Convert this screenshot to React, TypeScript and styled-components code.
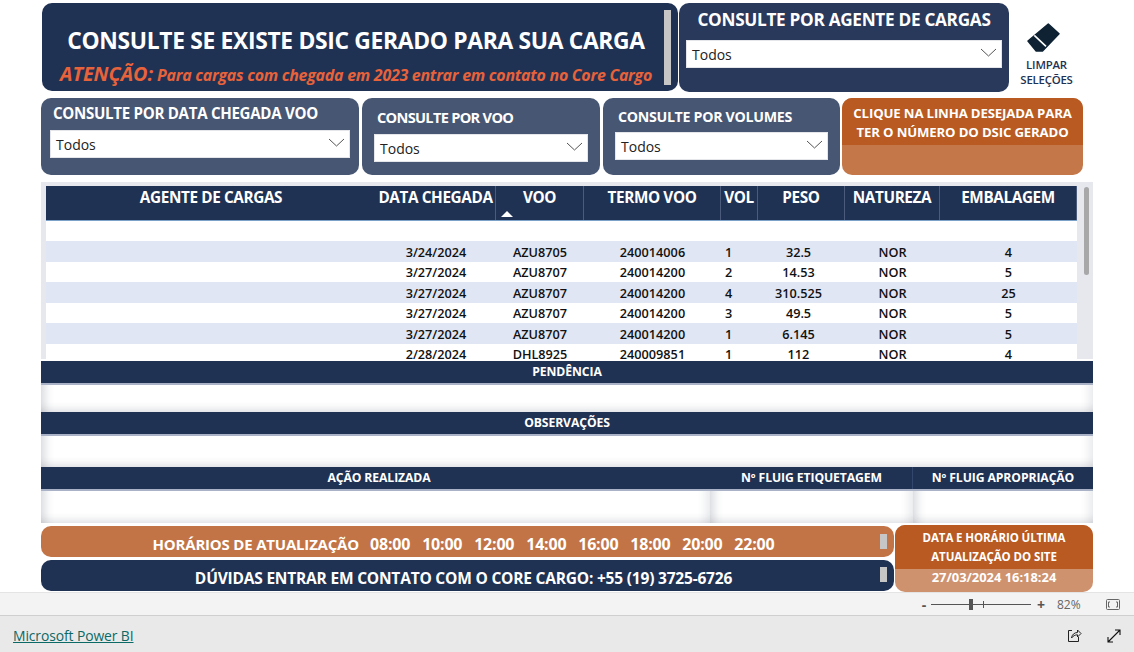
import React from 'react';
import styled, { createGlobalStyle } from 'styled-components';

const NAVY = '#1f3254';
const ORANGE = '#b85a22';
const FONT = '"Open Sans", "Noto Sans", sans-serif';

const Global = createGlobalStyle`
  html, body { margin: 0; padding: 0; background: #fff; }
  body { font-family: ${FONT}; width: 1134px; height: 652px; overflow: hidden; }
  * { box-sizing: border-box; }
`;

const Page = styled.div`
  width: 1134px;
  height: 652px;
  display: flex;
  flex-direction: column;
`;

const Canvas = styled.main`
  height: 592px;
  padding: 3px 41px 0 41px;
  display: flex;
  flex-direction: column;
`;

const TopRow = styled.div`
  display: flex;
  height: 89px;
  padding-left: 1px;
  gap: 1px;
`;

const TitleCard = styled.section`
  position: relative;
  width: 636px;
  height: 88px;
  background: ${NAVY};
  border-radius: 10px;
  color: #fff;
  text-align: center;
  padding: 24px 22px 0 14px;
`;

const Title = styled.h1`
  margin: 0;
  font-size: 22.85px;
  line-height: 28px;
  font-weight: 700;
  white-space: nowrap;
  letter-spacing: -0.33px;
`;

const Notice = styled.p`
  margin: 7px -8px 0 -8px;
  color: #e8623a;
  font-style: italic;
  font-weight: 700;
  font-size: 15.95px;
  line-height: 24px;
  white-space: nowrap;
  letter-spacing: -0.25px;

  b {
    font-size: 19.8px;
    font-weight: 700;
    letter-spacing: 0;
  }
`;

const ScrollThumb = styled.span<{ $top: number; $right: number; $w: number; $h: number }>`
  position: absolute;
  top: ${p => p.$top}px;
  right: ${p => p.$right}px;
  width: ${p => p.$w}px;
  height: ${p => p.$h}px;
  background: #c6c6c6;
`;

const AgentCard = styled.section`
  width: 330px;
  height: 89px;
  background: #29395c;
  border-radius: 10px;
  padding: 6px 7px 0;
  text-align: center;
`;

const CardLabel = styled.div<{ $size: number; $ls: number }>`
  color: #fff;
  font-weight: 700;
  font-size: ${p => p.$size}px;
  line-height: 22px;
  white-space: nowrap;
  letter-spacing: ${p => p.$ls}px;
`;

const Select = styled.div<{ $top: number; $w: number }>`
  width: ${p => p.$w}px;
  height: 28px;
  margin-top: ${p => p.$top}px;
  background: #fff;
  border: 1px solid #e4e6ea;
  display: flex;
  align-items: center;
  justify-content: space-between;
  padding: 0 4px 0 5px;
  color: #222;
  font-size: 14px;
  text-align: left;
  svg { margin-top: -4px; }
`;

const Chevron = () => (
  <svg width="17" height="9" viewBox="0 0 17 9" fill="none" stroke="#555" strokeWidth="1">
    <path d="M1 1l7.500 7 7.500-7" />
  </svg>
);

const ClearButton = styled.button`
  flex: 1;
  border: 0;
  background: none;
  padding: 20px 10px 0 0;
  display: flex;
  flex-direction: column;
  align-items: center;
  color: #1f3254;
  font-family: ${FONT};
  font-size: 11.4px;
  font-weight: 600;
  line-height: 15px;
  letter-spacing: -0.2px;
  svg { margin: 0 7px 5px 0; }
`;

const FilterRow = styled.div`
  display: flex;
  height: 79px;
  margin-top: 6px;
  gap: 3px;
`;

const FilterCard = styled.section<{ $w: number; $padTop: number; $padLeft: number }>`
  width: ${p => p.$w}px;
  height: 77px;
  background: #475672;
  border-radius: 10px;
  padding: ${p => p.$padTop}px 0 0 ${p => p.$padLeft}px;
`;

const FilterSelectSlot = styled.div<{ $back: number }>`
  margin-left: -${p => p.$back}px;
`;

const HintCard = styled.section`
  width: 241px;
  height: 77px;
  margin-left: -1px;
  border-radius: 10px;
  overflow: hidden;
  background: #c4784a;
`;

const HintText = styled.div`
  height: 47px;
  background: ${ORANGE};
  color: #fff;
  text-align: center;
  font-size: 13.2px;
  font-weight: 700;
  line-height: 19px;
  padding-top: 6px;
  white-space: nowrap;
  letter-spacing: -0.15px;
`;

const TablePanel = styled.section`
  position: relative;
  height: 178px;
  margin-top: 5px;
  background: #e6e8ee;
  padding: 4px 16px 0 5px;
  overflow: hidden;
`;

const Viewport = styled.div`
  height: 174px;
  background: #fff;
  overflow: hidden;
`;

const COLS = '330px 120px 88px 137px 37px 87px 95px 137px';

const HeadRow = styled.div`
  display: grid;
  grid-template-columns: ${COLS};
  height: 35px;
  background: ${NAVY};
  border-bottom: 1px solid #7da2c9;
`;

const HeadCell = styled.div<{ $line?: boolean }>`
  position: relative;
  color: #fff;
  text-align: center;
  font-size: 15.3px;
  font-weight: 700;
  line-height: 23px;
  white-space: nowrap;
  letter-spacing: -0.38px;
  border-right: ${p => (p.$line ? '1px solid #4b5b7b' : '0')};
`;

const SortArrow = styled.span`
  position: absolute;
  left: 5px;
  top: 25px;
  width: 0;
  height: 0;
  border-left: 6px solid transparent;
  border-right: 6px solid transparent;
  border-bottom: 6px solid #fff;
`;

const BlankRow = styled.div`
  height: 20px;
`;

const BodyRow = styled.div<{ $alt: boolean }>`
  display: grid;
  grid-template-columns: ${COLS};
  height: ${p => (p.$alt ? 21 : 20)}px;
  line-height: ${p => (p.$alt ? 22 : 20)}px;
  background: ${p => (p.$alt ? '#e0e6f3' : '#fff')};
`;

const BodyCell = styled.div<{ $start?: boolean; $shift?: number }>`
  color: #111;
  font-size: 12.7px;
  font-weight: 600;
  text-align: ${p => (p.$start ? 'left' : 'center')};
  padding-left: ${p => (p.$start ? 4 : 0)}px;
  padding-right: ${p => p.$shift ?? 0}px;
  white-space: nowrap;
`;

const TableThumb = styled.span`
  position: absolute;
  top: 5px;
  right: 4px;
  width: 5px;
  height: 88px;
  border-radius: 3px;
  background: #a8a8a8;
`;

const Band = styled.div<{ $h: number; $top?: number }>`
  display: flex;
  height: ${p => p.$h}px;
  margin-top: ${p => p.$top ?? 0}px;
  background: ${NAVY};
  border-bottom: 2px solid #a9b2c6;
  color: #fff;
  font-size: 12.2px;
  font-weight: 700;
  line-height: 21px;
  letter-spacing: -0.1px;
`;

const BandCell = styled.div<{ $w?: number; $line?: boolean; $inset?: number }>`
  flex: ${p => (p.$w ? `0 0 ${p.$w}px` : '1')};
  text-align: center;
  white-space: nowrap;
  padding-right: ${p => p.$inset ?? 0}px;
  border-right: ${p => (p.$line ? '1px solid #33466b' : '0')};
`;

const BlankStrip = styled.div<{ $h: number }>`
  display: flex;
  height: ${p => p.$h}px;
`;

const BlankCell = styled.div<{ $w?: number }>`
  flex: ${p => (p.$w ? `0 0 ${p.$w}px` : '1')};
  background: #fff;
  box-shadow:
    inset 0 -9px 9px -7px rgba(60, 70, 90, 0.2),
    inset 14px 0 10px -10px rgba(60, 70, 90, 0.2),
    inset -14px 0 10px -10px rgba(60, 70, 90, 0.12);
`;

const BottomRow = styled.div`
  display: flex;
  margin-top: 2px;
  gap: 1px;
`;

const Pills = styled.div`
  width: 853px;
  padding-top: 1px;
  display: flex;
  flex-direction: column;
  gap: 3px;
`;

const Pill = styled.div<{ $bg: string; $size: number; $lh: number }>`
  position: relative;
  height: 31px;
  padding-right: 8px;
  border-radius: 10px;
  background: ${p => p.$bg};
  color: #fff;
  font-size: ${p => p.$size}px;
  font-weight: 700;
  line-height: ${p => p.$lh}px;
  text-align: center;
  white-space: pre;
  letter-spacing: -0.2px;
`;

const Times = styled.span`
  font-size: 16px;
`;

const RefreshCard = styled.aside`
  width: 198px;
  height: 67px;
  border-radius: 10px;
  overflow: hidden;
  background: #cf926f;
  color: #fff;
  text-align: center;
  font-weight: 700;
  font-size: 11.5px;
`;

const RefreshTitle = styled.div`
  height: 44px;
  background: ${ORANGE};
  padding-top: 4px;
  line-height: 18.500px;
  letter-spacing: -0.1px;
`;

const RefreshStamp = styled.div`
  font-size: 12.9px;
  line-height: 16px;
`;

const ZoomBar = styled.div`
  height: 24px;
  background: #f3f3f3;
  border-top: 1px solid #e4e4e4;
  border-bottom: 1px solid #cfcfcf;
  display: flex;
  align-items: center;
  justify-content: flex-end;
  padding-right: 14px;
  color: #666;
  font-size: 12px;
`;

const ZoomSign = styled.span`
  color: #555;
  font-size: 14px;
  font-weight: 700;
  width: 12px;
  text-align: center;
`;

const ZoomTrack = styled.div`
  position: relative;
  width: 100px;
  height: 1px;
  margin: 0 4px 0 1px;
  background: #555;
`;

const ZoomThumb = styled.span`
  position: absolute;
  left: 38px;
  top: -5px;
  width: 4px;
  height: 11px;
  background: #555;
`;

const ZoomTick = styled.span`
  position: absolute;
  left: 52px;
  top: -3px;
  width: 1px;
  height: 7px;
  background: #555;
`;

const ZoomValue = styled.span`
  margin-left: 10px;
  width: 29px;
`;

const FitIcon = styled.svg`
  margin-left: 20px;
`;

const Footer = styled.footer`
  flex: 1;
  background: #e9e9e9;
  display: flex;
  align-items: center;
  padding: 3px 13px 0;
`;

const BrandLink = styled.a`
  color: #0b6a66;
  font-size: 13.9px;
  text-decoration: underline;
  letter-spacing: -0.1px;
  margin-right: auto;
`;

const FooterIcon = styled.svg`
  margin-left: 25px;
`;

const columns = ['AGENTE DE CARGAS', 'DATA CHEGADA', 'VOO', 'TERMO VOO', 'VOL', 'PESO', 'NATUREZA', 'EMBALAGEM'];

const rows = [
  ['3/24/2024', 'AZU8705', '240014006', '1', '32.5', 'NOR', '4'],
  ['3/27/2024', 'AZU8707', '240014200', '2', '14.53', 'NOR', '5'],
  ['3/27/2024', 'AZU8707', '240014200', '4', '310.525', 'NOR', '25'],
  ['3/27/2024', 'AZU8707', '240014200', '3', '49.5', 'NOR', '5'],
  ['3/27/2024', 'AZU8707', '240014200', '1', '6.145', 'NOR', '5'],
  ['2/28/2024', 'DHL8925', '240009851', '1', '112', 'NOR', '4'],
];

const filters = [
  { label: 'CONSULTE POR DATA CHEGADA VOO', w: 318, padTop: 4, padLeft: 12, size: 15.1, ls: -0.3, gap: 6, sel: 300, back: 3 },
  { label: 'CONSULTE POR VOO', w: 238, padTop: 8, padLeft: 15, size: 14.6, ls: -0.7, gap: 6, sel: 214, back: 3 },
  { label: 'CONSULTE POR VOLUMES', w: 237, padTop: 8, padLeft: 15, size: 14.2, ls: -0.3, gap: 4, sel: 213, back: 3 },
];

const updateTimes = ['08:00', '10:00', '12:00', '14:00', '16:00', '18:00', '20:00', '22:00'];

export default function App() {
  return (
    <Page>
      <Global />
      <Canvas>
        <TopRow>
          <TitleCard>
            <Title>CONSULTE SE EXISTE DSIC GERADO PARA SUA CARGA</Title>
            <Notice>
              <b>ATENÇÃO:</b> Para cargas com chegada em 2023 entrar em contato no Core Cargo
            </Notice>
            <ScrollThumb $top={7} $right={7} $w={7} $h={75} />
          </TitleCard>
          <AgentCard>
            <CardLabel $size={17.2} $ls={-0.3}>CONSULTE POR AGENTE DE CARGAS</CardLabel>
            <Select $top={9} $w={316}>
              Todos
              <Chevron />
            </Select>
          </AgentCard>
          <ClearButton>
            <svg width="33" height="29" viewBox="0 0 33 29">
              <path
                fill="#0e2233"
                stroke="#0e2233"
                strokeWidth="1.5"
                strokeLinejoin="round"
                d="M21.300 1L32 10.700 15.500 28H9.200L1 18z"
              />
              <path stroke="#fff" strokeWidth="1.6" d="M7.300 12.300L19 23.300" />
            </svg>
            <span>LIMPAR</span>
            <span>SELEÇÕES</span>
          </ClearButton>
        </TopRow>

        <FilterRow>
          {filters.map(f => (
            <FilterCard key={f.label} $w={f.w} $padTop={f.padTop} $padLeft={f.padLeft}>
              <CardLabel $size={f.size} $ls={f.ls}>{f.label}</CardLabel>
              <FilterSelectSlot $back={f.back}>
                <Select $top={f.gap} $w={f.sel}>
                  Todos
                  <Chevron />
                </Select>
              </FilterSelectSlot>
            </FilterCard>
          ))}
          <HintCard>
            <HintText>
              CLIQUE NA LINHA DESEJADA PARA
              <br />
              TER O NÚMERO DO DSIC GERADO
            </HintText>
          </HintCard>
        </FilterRow>

        <TablePanel>
          <Viewport>
            <HeadRow>
              {columns.map((c, i) => (
                <HeadCell key={c} $line={i > 0}>
                  {c}
                  {c === 'VOO' && <SortArrow />}
                </HeadCell>
              ))}
            </HeadRow>
            <BlankRow />
            {rows.map((r, i) => (
              <BodyRow key={i} $alt={i % 2 === 0}>
                <span />
                {r.map((v, j) => (
                  <BodyCell key={j} $start={j === 3} $shift={j === 4 ? 6 : 0}>
                    {v}
                  </BodyCell>
                ))}
              </BodyRow>
            ))}
          </Viewport>
          <TableThumb />
        </TablePanel>

        <Band $h={24} $top={2}>
          <BandCell>PENDÊNCIA</BandCell>
        </Band>
        <BlankStrip $h={27}>
          <BlankCell />
        </BlankStrip>
        <Band $h={24}>
          <BandCell>OBSERVAÇÕES</BandCell>
        </Band>
        <BlankStrip $h={31}>
          <BlankCell />
        </BlankStrip>
        <Band $h={24}>
          <BandCell $w={676}>AÇÃO REALIZADA</BandCell>
          <BandCell $w={196} $line $inset={6}>Nº FLUIG ETIQUETAGEM</BandCell>
          <BandCell>Nº FLUIG APROPRIAÇÃO</BandCell>
        </Band>
        <BlankStrip $h={32}>
          <BlankCell $w={669} />
          <BlankCell $w={203} />
          <BlankCell />
        </BlankStrip>

        <BottomRow>
          <Pills>
            <Pill $bg="#c27446" $size={15} $lh={37}>
              {'HORÁRIOS DE ATUALIZAÇÃO   '}
              <Times>{updateTimes.join('   ')}</Times>
              <ScrollThumb $top={8} $right={7} $w={7} $h={15} />
            </Pill>
            <Pill $bg={NAVY} $size={15.5} $lh={36}>
              DÚVIDAS ENTRAR EM CONTATO COM O CORE CARGO: +55 (19) 3725-6726
              <ScrollThumb $top={7} $right={7} $w={7} $h={15} />
            </Pill>
          </Pills>
          <RefreshCard>
            <RefreshTitle>
              DATA E HORÁRIO ÚLTIMA
              <br />
              ATUALIZAÇÃO DO SITE
            </RefreshTitle>
            <RefreshStamp>27/03/2024 16:18:24</RefreshStamp>
          </RefreshCard>
        </BottomRow>
      </Canvas>

      <ZoomBar>
        <ZoomSign>-</ZoomSign>
        <ZoomTrack>
          <ZoomThumb />
          <ZoomTick />
        </ZoomTrack>
        <ZoomSign>+</ZoomSign>
        <ZoomValue>82%</ZoomValue>
        <FitIcon width="14" height="11" viewBox="0 0 14 11" fill="none" stroke="#666">
          <rect x="0.5" y="0.5" width="13" height="10" rx="1" />
          <path d="M4 3H2.500v5H4M10 3h1.500v5H10" />
        </FitIcon>
      </ZoomBar>

      <Footer>
        <BrandLink href="#">Microsoft Power BI</BrandLink>
        <FooterIcon width="15" height="15" viewBox="0 0 15 15" fill="none" stroke="#222">
          <path d="M5 2.500H1.500v11h10V9" />
          <path d="M4.500 10c.5-3.500 3-5.500 6-5.500V2L14 5.500 10.500 9V6.800C8 6.800 6 8 4.500 10z" />
        </FooterIcon>
        <FooterIcon width="14" height="14" viewBox="0 0 14 14" fill="none" stroke="#111" strokeWidth="1.1">
          <path d="M1 13L13 1M8 1h5v5M1 8v5h5" />
        </FooterIcon>
      </Footer>
    </Page>
  );
}
